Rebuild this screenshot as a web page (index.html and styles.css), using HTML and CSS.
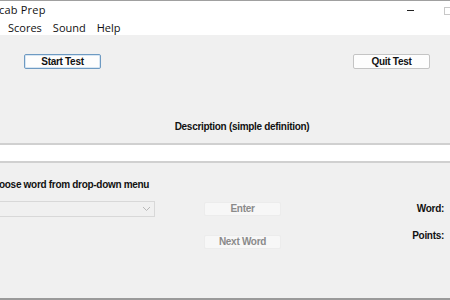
FILE: index.html
```html
<!DOCTYPE html>
<html>
<head>
<meta charset="utf-8">
<link rel="stylesheet" href="styles.css">
</head>
<body>
<div class="window">
  <div class="titlebar">
    <span class="title">cab Prep</span>
    <div class="controls">
      <span class="min"></span>
      <span class="max"></span>
    </div>
  </div>
  <div class="menubar">
    <span class="menu">Scores</span>
    <span class="menu">Sound</span>
    <span class="menu">Help</span>
  </div>
  <div class="content">
    <div class="toprow">
      <button class="btn start">Start Test</button>
      <button class="btn quit">Quit Test</button>
    </div>
    <div class="desc">Description (simple definition)</div>
    <div class="field"></div>
    <div class="choose">oose word from drop-down menu</div>
    <div class="lower">
      <div class="combo"><span class="chev"><svg width="9" height="6" viewBox="0 0 9 6"><path d="M1 1 L4.5 4.5 L8 1" fill="none" stroke="#b8b8b8" stroke-width="1"/></svg></span></div>
      <div class="btncol">
        <button class="btn dis">Enter</button>
        <button class="btn dis next">Next Word</button>
      </div>
      <div class="labels">
        <span class="lbl">Word:</span>
        <span class="lbl pts">Points:</span>
      </div>
    </div>
  </div>
</div>
</body>
</html>
```
FILE: styles.css
```css
html, body {
  margin: 0;
  padding: 0;
}
body {
  width: 450px;
  height: 300px;
  overflow: hidden;
  background: #f0f0f0;
}
.window {
  width: 450px;
  height: 300px;
  box-sizing: border-box;
  border-top: 1px solid #a0a0a0;
  border-bottom: 2px solid #9a9a9a;
  display: flex;
  flex-direction: column;
  background: #f0f0f0;
}
.titlebar {
  height: 17px;
  background: #fff;
  display: flex;
  align-items: center;
  justify-content: space-between;
  font-family: "Open Sans", sans-serif;
  font-size: 11px;
  color: #111;
}
.title {
  margin-left: -1px;
  margin-top: -1px;
  letter-spacing: 0.2px;
}
.controls {
  display: flex;
  align-items: center;
  gap: 30px;
  margin-right: -1px;
  margin-top: 2px;
}
.min {
  width: 7px;
  height: 1px;
  background: #222;
}
.max {
  width: 7px;
  height: 8px;
  border: 1px solid #c8c8c8;
  box-sizing: border-box;
}
.menubar {
  height: 17px;
  background: #fff;
  display: flex;
  align-items: center;
  gap: 11px;
  padding-left: 8px;
  font-family: "Open Sans", sans-serif;
  font-size: 11px;
  color: #111;
}
.menu {
  margin-top: 2px;
}
.content {
  flex: 1;
  display: flex;
  flex-direction: column;
  font-family: "Liberation Sans", Arial, sans-serif;
  font-weight: bold;
  font-size: 10px;
  letter-spacing: -0.3px;
  color: #111;
}
.toprow {
  display: flex;
  justify-content: space-between;
  padding: 19px 20px 0 24px;
}
.btn {
  width: 77px;
  height: 15px;
  padding: 0;
  box-sizing: border-box;
  font-family: "Liberation Sans", Arial, sans-serif;
  font-weight: bold;
  font-size: 10px;
  letter-spacing: -0.3px;
  color: #111;
  background: #fdfdfd;
  border: 1px solid #c4c4c4;
  border-radius: 2px;
  line-height: 13px;
}
.start {
  border-color: #6e9ac2;
  box-shadow: 0 0 0 1px #d7e6f3 inset;
}
.desc {
  text-align: center;
  padding-left: 34px;
  margin-top: 51px;
  line-height: 13px;
}
.field {
  margin-top: 10px;
  height: 16px;
  background: #fff;
  border-top: 2px solid #d0d0d0;
  border-bottom: 2px solid #d0d0d0;
}
.choose {
  margin-top: 15px;
  line-height: 13px;
  margin-left: -1px;
}
.lower {
  display: flex;
  margin-top: 10px;
}
.combo {
  width: 155px;
  height: 16px;
  box-sizing: border-box;
  border: 1px solid #d8d8d8;
  border-left: none;
  background: #f0f0f0;
  display: flex;
  justify-content: flex-end;
  align-items: center;
  padding-right: 3px;
}
.chev {
  display: flex;
}
.btncol {
  display: flex;
  flex-direction: column;
  margin-left: 49px;
  margin-top: 1px;
  gap: 19px;
}
.dis {
  color: #8a8a8a;
  background: #f7f7f7;
  border-color: #ececec;
  height: 14px;
  line-height: 12px;
}
.labels {
  flex: 1;
  display: flex;
  flex-direction: column;
  align-items: flex-end;
  padding-right: 6px;
  padding-top: 1px;
  gap: 14px;
}
.lbl {
  line-height: 13px;
}
```
